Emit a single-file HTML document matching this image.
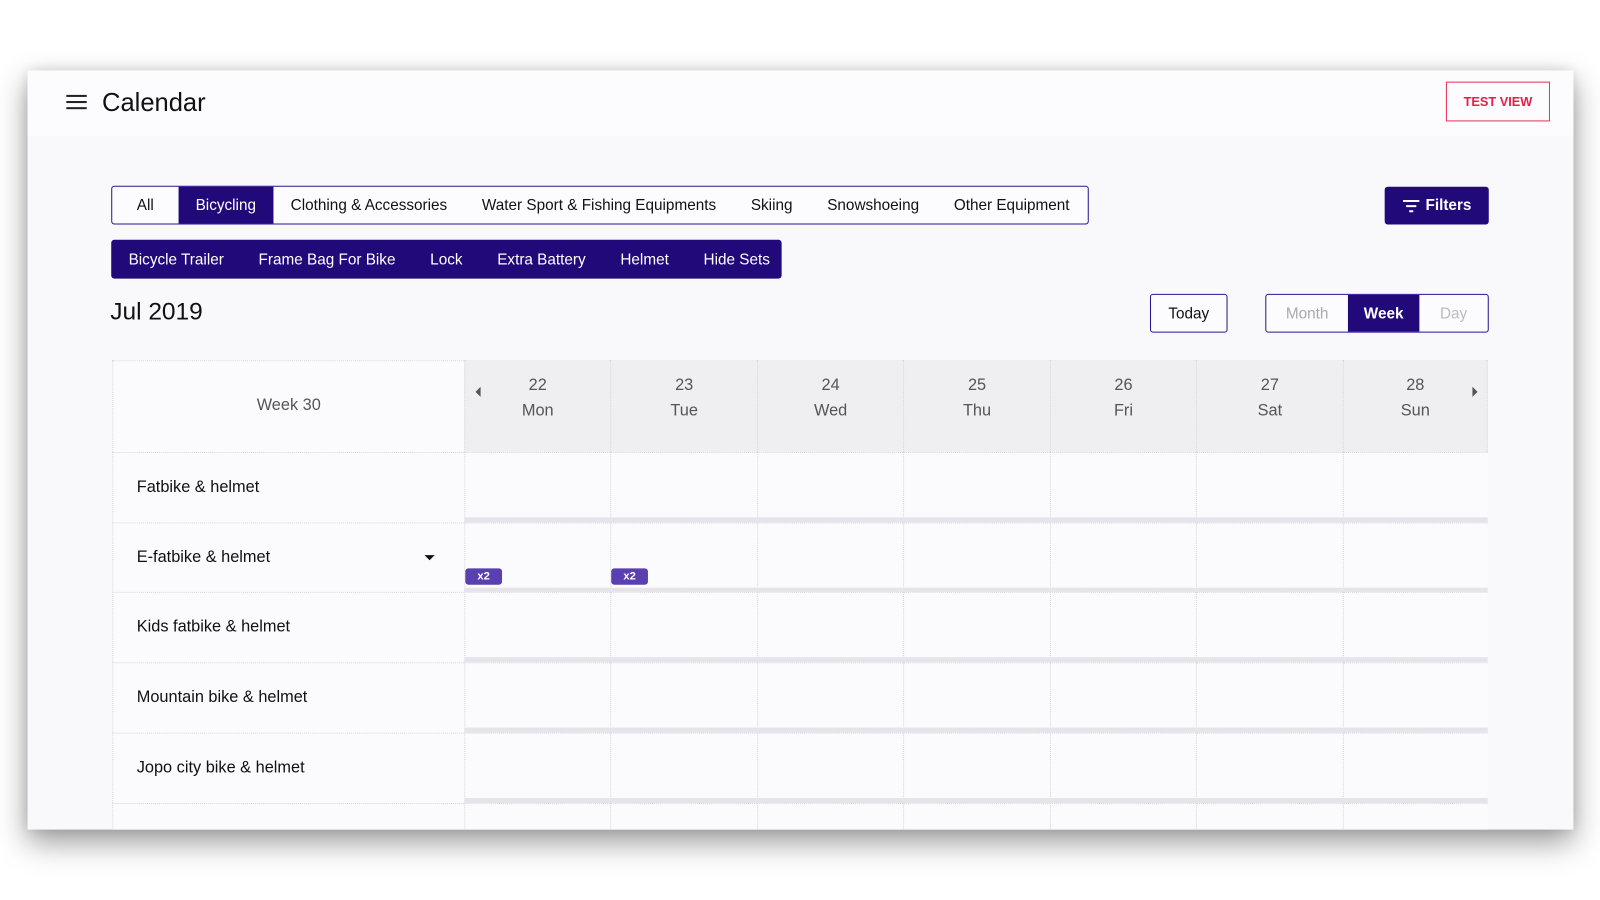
<!DOCTYPE html>
<html><head><meta charset="utf-8"><style>
*{box-sizing:border-box;margin:0;padding:0}
body{width:1600px;height:900px;background:#fff;font-family:"Liberation Sans",sans-serif;position:relative;overflow:hidden;color:#111}
#wrap{position:absolute;left:0;top:0;width:1568px;height:882px;transform:scale(1.0204);transform-origin:0 0}
.card{position:absolute;left:27px;top:69px;width:1515px;height:744px;background:#f9f8fb;box-shadow:0 12px 28px rgba(0,0,0,.4),0 0 12px rgba(0,0,0,.12);overflow:hidden}
.hdr{position:absolute;left:0;top:0;width:1515px;height:64px;background:#fcfbfd}
.a{position:absolute}
.tabs{position:absolute;left:82px;top:113px;width:958px;height:38px;border:1.5px solid #2a1490;border-radius:3px;background:#fcfbfd;display:flex;align-items:center;font-size:15px;white-space:nowrap}
.tabs span{padding:0 17px;height:100%;display:flex;align-items:center}
.tabs .on{background:#22097a;color:#fff}
.sub{position:absolute;left:82px;top:166px;width:657px;height:38px;background:#22097a;border-radius:3px;display:flex;align-items:center;color:#fff;font-size:15px;padding-left:17px;white-space:nowrap}
.sub span{margin-right:34px}
.btn{position:absolute;border:1.5px solid #2a1490;border-radius:3px;background:#fcfbfd;display:flex;align-items:center;justify-content:center;font-size:15px}
.grid{position:absolute;left:83px;top:284px}
.hc{position:absolute;top:0;height:90px;background:#efeef1;border-left:1px dotted #d8d6dc;text-align:center;color:#555;font-size:16px;line-height:25px;padding-top:12px}
.lc{position:absolute;left:0;width:345px;border-top:1px dotted #d8d6dc;border-left:1px dotted #d8d6dc;font-size:16px;display:flex;align-items:center;padding-left:23px}
.dc{position:absolute;border-left:1px dotted #d8d6dc;background:#fbfafc}
.bar{position:absolute;height:5px;background:#e6e4ea}
.badge{position:absolute;width:36px;height:16px;background:#5a3fb0;border-radius:3px;color:#fff;font-size:11px;text-align:center;line-height:16px;font-weight:bold}
</style></head><body>
<div id="wrap">
<div class="card">
 <div class="hdr">
  <div class="a" style="left:38px;top:24px;width:20px;height:2px;background:#222;box-shadow:0 6px 0 #222,0 12px 0 #222"></div>
  <div class="a" style="left:73px;top:18px;font-size:25px;color:#111">Calendar</div>
  <div class="a" style="left:1390px;top:11px;width:102px;height:39px;border:1.5px solid #e8335a;color:#e0204a;font-size:12.5px;font-weight:bold;display:flex;align-items:center;justify-content:center">TEST VIEW</div>
 </div>
 <div class="tabs"><span style="padding:0 24px">All</span><span class="on">Bicycling</span><span>Clothing &amp; Accessories</span><span>Water Sport &amp; Fishing Equipments</span><span>Skiing</span><span>Snowshoeing</span><span>Other Equipment</span></div>
 <div class="sub"><span>Bicycle Trailer</span><span>Frame Bag For Bike</span><span>Lock</span><span>Extra Battery</span><span>Helmet</span><span>Hide Sets</span></div>
 <div class="a" style="left:1330px;top:114px;width:102px;height:37px;background:#22097a;border-radius:3px;color:#fff;font-size:15px;font-weight:bold;display:flex;align-items:center;justify-content:center">
  <svg width="18" height="14" style="margin-right:5px"><path d="M1 2h16M4 7h10M7 12h4" stroke="#fff" stroke-width="2"/></svg>Filters</div>
 <div class="a" style="left:81px;top:223px;font-size:24px;font-weight:500">Jul 2019</div>
 <div class="btn" style="left:1100px;top:219px;width:76px;height:38px">Today</div>
 <div class="btn" style="left:1213px;top:219px;width:219px;height:38px;justify-content:flex-start;overflow:hidden">
  <span style="width:80px;text-align:center;color:#aaa">Month</span><span style="width:70px;height:100%;background:#22097a;color:#fff;display:flex;align-items:center;justify-content:center;font-weight:bold">Week</span><span style="width:67px;text-align:center;color:#bbb">Day</span></div>
 <div class="grid">
  <div class="a" style="left:0;top:0;width:345px;height:90px;border-top:1px dotted #d8d6dc;border-left:1px dotted #d8d6dc;background:#fbfafc;text-align:center;line-height:88px;color:#555;font-size:16px">Week 30</div>
  <div class="a" style="left:345px;top:0;width:1003px;height:90px;background:#efeef1;border-top:1px dotted #d8d6dc"></div>
  <div class="hc" style="left:345px;width:143px">22<br>Mon</div>
  <div class="hc" style="left:488px;width:144px">23<br>Tue</div>
  <div class="hc" style="left:632px;width:143px">24<br>Wed</div>
  <div class="hc" style="left:775px;width:144px">25<br>Thu</div>
  <div class="hc" style="left:919px;width:143px">26<br>Fri</div>
  <div class="hc" style="left:1062px;width:144px">27<br>Sat</div>
  <div class="hc" style="left:1206px;width:142px;border-right:1px dotted #d8d6dc">28<br>Sun</div>
  <div class="a" style="left:356px;top:26px;width:0;height:0;border-top:5px solid transparent;border-bottom:5px solid transparent;border-right:5px solid #555"></div>
  <div class="a" style="left:1333px;top:26px;width:0;height:0;border-top:5px solid transparent;border-bottom:5px solid transparent;border-left:5px solid #555"></div>
 </div>
 <div id="rows"></div>
</div>
</div>
<script>
var names=["Fatbike &amp; helmet","E-fatbike &amp; helmet","Kids fatbike &amp; helmet","Mountain bike &amp; helmet","Jopo city bike &amp; helmet",""];
var cols=[345,488,632,775,919,1062,1206,1348];
var h="";
for(var i=0;i<6;i++){var t=374+i*68.7;
h+='<div class="lc" style="left:83px;top:'+t+'px;height:69px;background:#fbfafc">'+names[i]+(i==1?'<span style="position:absolute;left:305px;top:31px;border-left:5px solid transparent;border-right:5px solid transparent;border-top:5px solid #111"></span>':'')+'</div>';
for(var c=0;c<7;c++){h+='<div class="dc" style="left:'+(83+cols[c])+'px;top:'+t+'px;width:'+(cols[c+1]-cols[c])+'px;height:69px;border-top:1px dotted #d8d6dc"></div>';}
h+='<div class="bar" style="left:428px;top:'+(t+64)+'px;width:1003px"></div>';
}
h+='<div class="badge" style="left:429px;top:488px">x2</div><div class="badge" style="left:572px;top:488px">x2</div>';
document.getElementById("rows").innerHTML=h;
</script>
</body></html>
